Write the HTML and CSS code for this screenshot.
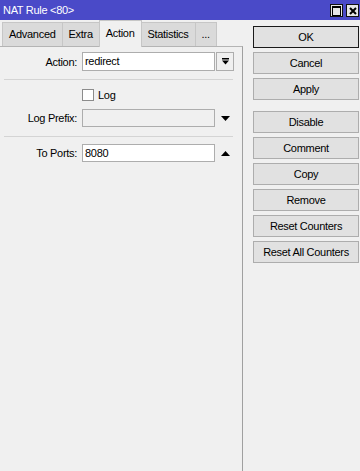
FILE: index.html
```html
<!DOCTYPE HTML>
<html>

<head>
    <link rel="stylesheet" href="styles.css">
</head>

<body>
    <div class="window">
        <div class="titlebar">
            <span class="title">NAT Rule &lt;80&gt;</span>
            <div class="wbtns">
                <span class="wbtn"><span class="maxbox"></span></span>
                <span class="wbtn">
                    <svg width="8" height="8" viewBox="0 0 8 8"><path d="M1 1L7 7M7 1L1 7" stroke="#000" stroke-width="2" /></svg>
                </span>
            </div>
        </div>

        <div class="content">
            <div class="main">
                <div class="tabs">
                    <div class="tab">Advanced</div>
                    <div class="tab">Extra</div>
                    <div class="tab active">Action</div>
                    <div class="tab">Statistics</div>
                    <div class="tab">...</div>
                </div>

                <div class="panel">
                    <div class="row first">
                        <span class="label">Action:</span>
                        <span class="field">redirect</span>
                        <span class="dropbtn">
                            <svg width="7" height="7" viewBox="0 0 7 7"><rect x="0" y="0" width="7" height="1.5" fill="#000" /><polygon points="0,2.5 7,2.5 3.5,6.5" fill="#000" /></svg>
                        </span>
                    </div>

                    <div class="sep"></div>

                    <div class="checkrow">
                        <span class="checkbox"></span>
                        <span>Log</span>
                    </div>

                    <div class="row prefix">
                        <span class="label">Log Prefix:</span>
                        <span class="field disabled"></span>
                        <svg class="arrow" width="9" height="5" viewBox="0 0 9 5"><polygon points="0,0 9,0 4.5,5" fill="#000" /></svg>
                    </div>

                    <div class="sep second"></div>

                    <div class="row ports">
                        <span class="label">To Ports:</span>
                        <span class="field">8080</span>
                        <svg class="arrow" width="9" height="5" viewBox="0 0 9 5"><polygon points="0,5 9,5 4.5,0" fill="#000" /></svg>
                    </div>
                </div>
            </div>

            <div class="actions">
                <div class="btn default">OK</div>
                <div class="btn">Cancel</div>
                <div class="btn">Apply</div>
                <div class="btn spaced">Disable</div>
                <div class="btn">Comment</div>
                <div class="btn">Copy</div>
                <div class="btn">Remove</div>
                <div class="btn">Reset Counters</div>
                <div class="btn">Reset All Counters</div>
            </div>
        </div>
    </div>
</body>

</html>
```

FILE: styles.css
```css
body {
    margin: 0;
    background-color: #f0f0f0;
    font-family: "Liberation Sans", Arial, sans-serif;
    font-size: 11px;
    letter-spacing: -0.3px;
    color: #000;
}

.window {
    display: flex;
    flex-direction: column;
    height: 100vh;
}

.titlebar {
    height: 20px;
    flex-shrink: 0;
    display: flex;
    justify-content: space-between;
    padding: 0 1px 0 3px;
    background-color: #4a4ac8;
    color: #fff;
}

.title {
    line-height: 21px;
}

.wbtns {
    display: flex;
    gap: 3px;
    margin-top: 4px;
}

.wbtn {
    width: 13px;
    height: 13px;
    box-sizing: border-box;
    border: 1px solid #111;
    background-color: #e6e6e6;
    display: flex;
    align-items: center;
    justify-content: center;
}

.maxbox {
    width: 7px;
    height: 7px;
    border: 1px solid #000;
    border-top-width: 2px;
}

.content {
    flex: 1;
    display: flex;
}

.main {
    width: 243px;
    display: flex;
    flex-direction: column;
}

.tabs {
    display: flex;
    align-items: flex-end;
    height: 26px;
    padding-left: 2px;
}

.tab {
    height: 24px;
    box-sizing: border-box;
    line-height: 23px;
    padding: 0 6px;
    margin-right: -1px;
    background-color: #dadada;
    border: 1px solid #c6c6c6;
    border-bottom: none;
}

.tab.active {
    height: 27px;
    line-height: 25px;
    margin-bottom: -1px;
    background-color: #f0f0f0;
    position: relative;
    z-index: 1;
}

.panel {
    flex: 1;
    padding-top: 5px;
    border-top: 1px solid #b4b4b4;
    border-right: 1px solid #a0a0a0;
}

.row {
    display: flex;
    align-items: center;
    height: 18px;
}

.row.first {
    height: 19px;
}

.label {
    width: 82px;
    box-sizing: border-box;
    padding-right: 5px;
    text-align: right;
}

.field {
    width: 133px;
    height: 100%;
    box-sizing: border-box;
    padding-left: 2px;
    border: 1px solid #adadad;
    background-color: #fff;
    line-height: 16px;
}

.field.disabled {
    background-color: #f0f0f0;
}

.dropbtn {
    width: 18px;
    height: 19px;
    margin-left: 1px;
    box-sizing: border-box;
    border: 1px solid #adadad;
    display: flex;
    align-items: center;
    justify-content: center;
}

.arrow {
    margin-left: 6px;
}

.sep {
    height: 1px;
    margin: 8px 9px 0 4px;
    background-color: #d4d4d4;
}

.sep.second {
    margin-top: 9px;
}

.checkrow {
    display: flex;
    align-items: center;
    gap: 4px;
    height: 12px;
    margin: 9px 0 0 82px;
}

.checkbox {
    width: 12px;
    height: 12px;
    box-sizing: border-box;
    border: 1px solid #8c8c8c;
    background-color: #fff;
}

.row.prefix {
    margin-top: 8px;
}

.row.ports {
    margin-top: 7px;
}

.actions {
    display: flex;
    flex-direction: column;
    gap: 4px;
    padding: 6px 0 0 10px;
}

.btn {
    width: 106px;
    height: 22px;
    box-sizing: border-box;
    border: 1px solid #adadad;
    background-color: #e1e1e1;
    text-align: center;
    line-height: 20px;
}

.btn.default {
    border-color: #1a1a1a;
}

.btn.spaced {
    margin-top: 7px;
}
```
